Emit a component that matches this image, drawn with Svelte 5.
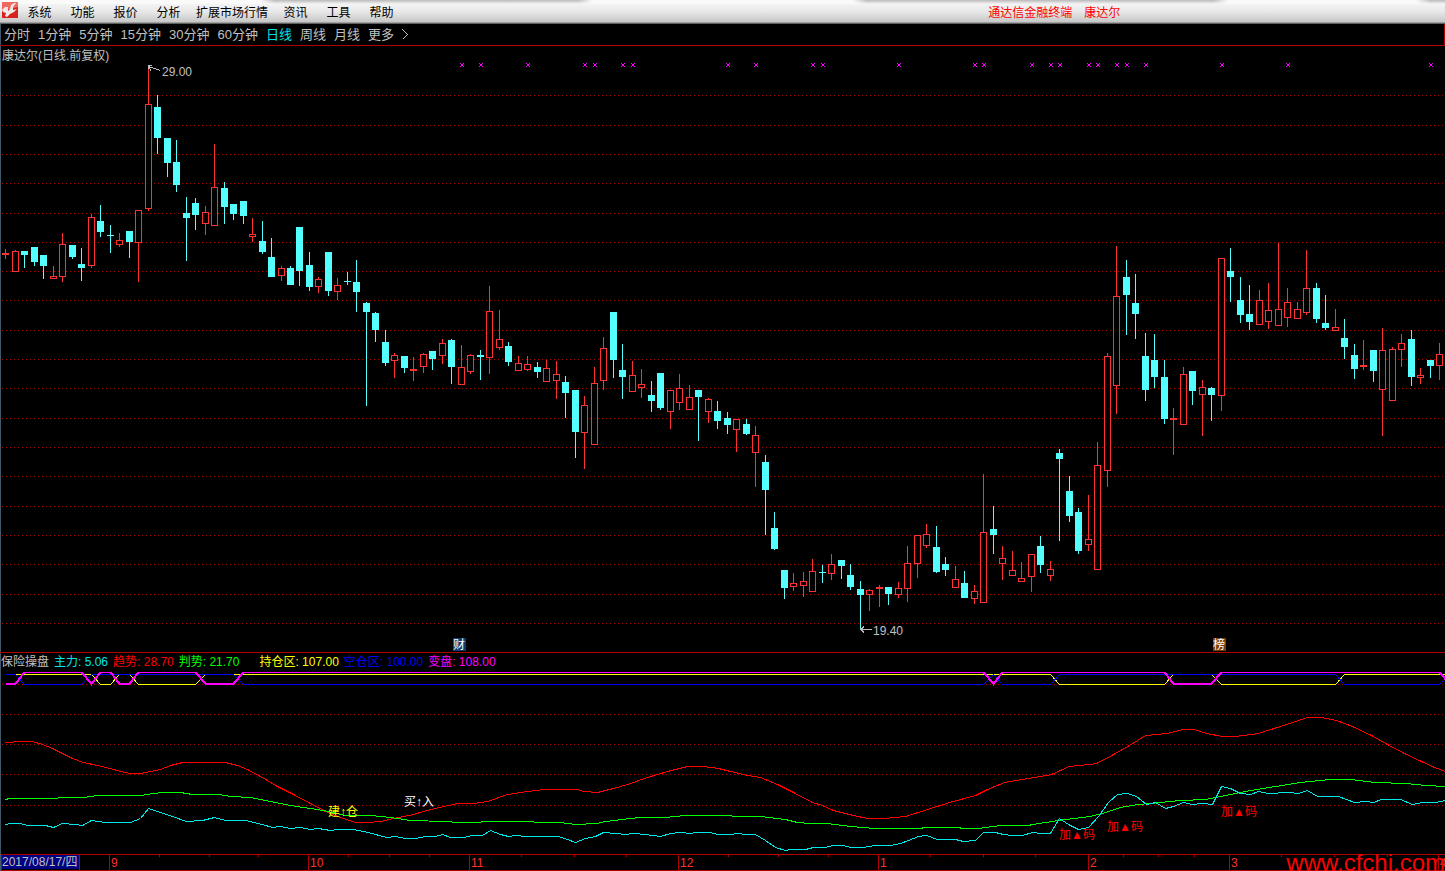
<script>
  // width of the window, everything on the charts is spread over it
  let width = 1445

  const menus = ['系统', '功能', '报价', '分析', '扩展市场行情', '资讯', '工具', '帮助']
  const periods = ['分时', '1分钟', '5分钟', '15分钟', '30分钟', '60分钟', '日线', '周线', '月线', '更多']
  let period = '日线'

  // up/down, high, body top, body bottom, low
  const candles = [
    ['r',249,253,255,259],['r',250,251,272,272],['c',251,251,255,268],['c',247,247,262,266],['c',255,255,266,279],
    ['r',266,276,279,279],['r',233,244,277,282],['c',245,245,257,259],['c',248,264,268,281],['r',214,217,266,268],
    ['c',205,221,232,237],['c',225,235,236,253],['r',233,240,245,247],['c',231,231,242,258],['r',210,210,243,282],
    ['r',69,104,209,211],['c',95,107,138,154],['c',138,138,163,177],['c',140,162,185,192],['c',197,213,218,261],
    ['c',198,203,215,230],['r',206,212,224,235],['r',144,187,226,226],['c',182,188,207,224],['c',204,204,214,220],
    ['c',201,201,216,224],['r',218,234,237,242],['c',221,241,252,254],['c',238,257,277,277],['r',266,268,276,281],
    ['c',266,268,285,285],['c',227,227,271,286],['c',252,265,287,291],['r',277,279,287,293],['c',252,252,291,296],
    ['r',278,285,292,300],['c',272,281,282,285],['c',260,282,292,312],['c',302,303,312,406],['c',312,313,330,342],
    ['c',330,342,363,366],['r',353,355,361,378],['c',356,356,368,373],['r',357,369,371,381],['r',353,354,367,373],
    ['c',351,351,359,370],['r',339,343,356,364],['c',339,340,367,384],['r',345,367,385,385],['r',354,355,372,374],
    ['c',350,355,357,380],['r',286,311,358,374],['r',310,339,348,350],['c',342,346,362,366],['r',356,363,371,371],
    ['r',356,364,370,371],['c',362,367,372,378],['r',360,368,382,382],['r',361,374,381,399],['c',376,382,393,418],
    ['c',390,390,432,458],['r',396,405,433,469],['r',367,383,445,445],['r',337,348,381,390],['c',312,312,360,378],
    ['c',344,370,377,399],['r',361,375,392,392],['r',369,384,388,398],['c',381,395,401,412],['c',373,373,408,410],
    ['r',390,390,412,429],['r',374,388,403,410],['r',385,397,410,410],['c',390,390,397,441],['r',398,399,412,423],
    ['c',401,411,421,429],['c',412,418,425,434],['r',419,419,430,452],['c',419,424,434,435],['r',426,435,453,487],
    ['c',455,462,490,535],['c',512,528,549,550],['c',570,570,588,599],['r',573,583,587,591],['r',572,581,586,597],
    ['r',559,571,592,592],['c',565,572,573,583],['r',554,564,574,580],['c',560,560,566,579],['c',564,575,587,590],
    ['c',581,589,595,629],['r',589,590,595,611],['r',585,587,589,607],['c',587,587,594,605],['r',582,588,595,598],
    ['r',546,563,589,602],['r',535,535,564,578],['r',524,534,546,548],['c',526,547,572,573],['c',557,564,570,576],
    ['r',566,579,588,588],['c',571,583,598,598],['r',585,591,599,604],['r',474,532,603,603],['c',506,529,535,554],
    ['r',546,558,564,580],['r',551,570,576,576],['r',562,578,582,582],['r',554,554,577,592],['c',536,546,565,573],
    ['r',561,569,576,581],['c',449,453,459,541],['c',476,491,516,522],['c',508,512,551,554],['r',495,539,545,551],
    ['r',442,465,570,570],['r',353,356,471,487],['r',246,296,386,414],['c',260,277,295,335],['c',274,303,314,339],
    ['c',333,356,390,401],['c',334,360,377,388],['c',360,377,419,424],['r',408,418,420,455],['r',367,374,425,425],
    ['c',371,371,391,405],['r',380,387,395,436],['c',387,388,395,421],['r',258,258,396,411],['c',248,271,277,302],
    ['c',277,300,315,323],['c',285,314,322,330],['r',290,300,325,325],['r',283,310,322,329],['r',243,309,326,326],
    ['r',288,302,318,327],['r',302,309,319,319],['r',250,288,313,315],['c',283,288,319,323],['c',295,323,328,330],
    ['r',309,327,331,331],['c',319,338,347,359],['c',344,355,369,379],['r',340,365,367,370],['c',350,350,371,382],
    ['r',328,350,390,436],['r',347,349,401,401],['r',334,343,350,367],['c',330,339,377,386],['r',368,375,378,384],
    ['c',360,360,366,378],['r',343,354,366,380]
  ]

  const signals = [48,50,55,61,62,65,66,76,79,85,86,94,102,103,108,110,111,114,115,117,118,120,128,135,150]
  const priceGrid = [95,125,154,183,213,242,271,300,330,359,388,418,447,476,506,535,564,594,623]
  const indGrid = [684,714,744,774,805]

  const trend = [5,742,20,741,32,741,42,744,52,748,62,753,72,758,83,762,97,765,110,768,120,771,130,773,140,773,150,771,160,769,170,765,182,762,225,762,237,765,247,769,260,776,277,786,293,794,310,803,325,811,340,817,355,822,367,822,380,821,393,818,413,814,430,809,448,805,457,803,473,803,487,801,507,794,520,792,543,789,577,789,583,791,597,792,613,788,627,784,647,777,667,771,687,766,703,766,718,768,730,771,747,775,760,777,777,784,793,792,812,802,822,805,833,810,853,815,867,818,883,818,905,816,924,810,949,802,975,795,987,789,1004,782,1022,779,1051,774,1069,766,1089,764,1096,763,1115,753,1129,745,1145,735,1166,733,1183,729,1194,729,1206,733,1222,736,1235,736,1258,733,1286,724,1307,717,1321,717,1336,720,1352,726,1371,735,1387,744,1404,753,1421,761,1434,767,1445,771]
  const judge = [5,799,9,798,55,798,60,797,83,797,97,795,140,795,153,793,163,792,180,792,192,794,218,794,230,796,250,797,270,801,290,805,323,810,345,815,370,815,390,817,410,820,445,821,457,822,475,822,487,821,532,821,535,822,560,822,575,824,596,823,605,821,630,818,640,817,665,817,685,815,730,815,733,816,760,816,785,819,797,822,810,823,827,823,850,826,875,828,920,828,924,827,957,827,963,828,978,828,1000,825,1027,825,1045,822,1065,819,1090,816,1105,812,1120,807,1138,804,1160,802,1180,800,1205,799,1225,795,1250,790,1275,786,1300,782,1330,779,1350,779,1375,782,1405,783,1425,785,1445,786]
  const force = [5,824,10,823,20,823,27,825,45,825,53,827,62,823,75,824,82,825,91,820,105,822,130,822,140,818,148,808,160,812,172,816,186,821,202,820,214,817,225,820,245,820,262,824,272,827,280,826,290,828,300,827,310,829,318,828,330,830,338,829,353,829,368,832,386,837,395,836,405,838,415,838,425,836,435,836,442,834,450,837,463,837,472,835,482,835,490,830,500,834,508,836,515,835,525,836,558,836,567,839,575,842,585,838,595,836,603,832,615,833,625,834,633,833,645,834,660,836,670,833,680,832,690,833,695,832,710,832,717,834,730,834,737,833,745,834,755,834,765,840,775,847,785,850,790,849,805,849,813,847,825,847,832,845,843,845,850,847,862,847,875,845,890,845,900,843,908,840,918,836,926,835,937,839,955,839,963,841,975,840,983,832,995,832,1003,834,1012,835,1022,835,1032,832,1040,833,1050,833,1059,818,1068,824,1078,829,1088,827,1098,816,1108,802,1117,794,1127,793,1136,796,1146,804,1155,802,1165,808,1173,806,1183,802,1192,804,1202,803,1212,804,1221,786,1230,788,1240,793,1250,794,1258,791,1268,793,1288,792,1298,793,1307,790,1317,796,1338,796,1354,802,1365,801,1373,802,1381,799,1400,799,1412,804,1422,802,1435,802,1445,800]

  // bar ranges of the three zone lines
  const turnLow = [[0,1],[9,9],[12,13],[21,24],[104,104],[123,127],[152,152]]
  const holdLow = [[10,11],[14,20],[111,122],[128,140]]
  const emptyHigh = [[0,1],[9,24],[104,104],[111,140],[152,152]]

  const legend = [
    { name: '主力: 5.06', color: 'aqua' },
    { name: '趋势: 28.70', color: 'red' },
    { name: '判势: 21.70', color: 'lime' },
    { name: '持仓区: 107.00', color: 'yellow' },
    { name: '空仓区: 100.00', color: 'blue' },
    { name: '变盘: 108.00', color: 'magenta' }
  ]

  const notes = [
    { text: '建↑仓', x: 328, y: 816, color: 'yellow' },
    { text: '买↑入', x: 404, y: 806, color: 'white' },
    { text: '加▲码', x: 1059, y: 839, color: 'red' },
    { text: '加▲码', x: 1107, y: 831, color: 'red' },
    { text: '加▲码', x: 1221, y: 816, color: 'red' }
  ]

  const months = [[109,'9'],[308,'10'],[469,'11'],[678,'12'],[878,'1'],[1088,'2'],[1229,'3'],[1438,'4']]
  const ticks = [159,209,258,348,389,429,521,574,626,728,778,828,930,983,1035,1123,1158,1194,1281,1334,1387]

  $: step = (width - 11) / 151
  $: bar = (i) => Math.floor(5.6 + i * step)
  $: sx = (x) => Math.round((x * width) / 1445)
  $: curve = (data) => {
    let out = ''
    for (let i = 0; i < data.length; i += 2) out += `${sx(data[i]) + 0.5},${data[i + 1] + 0.5} `
    return out
  }
  $: zone = (ranges, inside, outside) => {
    let out = ''
    for (let i = 0; i <= 152; i++) {
      const hit = ranges.some(([a, b]) => i >= a && i <= b)
      out += `${bar(i) + 0.5},${hit ? inside : outside} `
    }
    return out
  }
</script>

<div class="terminal" bind:clientWidth={width}>
  <header class="menubar">
    <svg class="logo" viewBox="0 0 16 16" aria-hidden="true">
      <rect width="16" height="16" fill="#d8201c" />
      <path d="M0 0H16V5L0 9Z" fill="#ee6a60" />
      <path d="M0 8L3 5L6 5L6 9L8 7L9 3L12 1L14 1L11 5L11 8L15 7L12 10L8 12L5 15L3 14L4 11L1 10Z" fill="#f0e8e4" />
    </svg>
    <nav>
      {#each menus as item}
        <button class="menu-item">{item}</button>
      {/each}
    </nav>
    <span class="app-title">通达信金融终端　康达尔</span>
  </header>

  <main>
    <div class="periods">
      {#each periods as p}
        <button class="period" class:active={p === period} on:click={() => (period = p)}>{p}</button>
      {/each}
      <button class="period" aria-label="更多周期">
        <svg width="6" height="11" viewBox="0 0 6 11"><path d="M0.5 0.5L5.5 5.5L0.5 10.5" fill="none" stroke="#c0c0c0" /></svg>
      </button>
    </div>

    <!-- price chart -->
    <section class="price">
      <h1>康达尔(日线.前复权)</h1>
      <svg {width} height="590" viewBox="0 62 {width} 590">
        {#each priceGrid as y}
          <line class="grid" x1="2" x2={width} y1={y + 0.5} y2={y + 0.5} />
        {/each}
        {#each signals as i}
          <path class="signal" d="M{bar(i) - 1} 63h1v1h2v-1h1v1h-1v2h1v1h-1v-1h-2v1h-1v-1h1v-2h-1z" />
        {/each}
        {#each candles as [kind, high, top, bottom, low], i}
          {#if kind === 'c'}
            <rect class="down" x={bar(i)} y={high} width="1" height={low - high} />
            <rect class="down" x={bar(i) - 3} y={top} width="7" height={bottom - top} />
          {:else}
            <rect class="up" x={bar(i)} y={high} width="1" height={top - high} />
            <rect class="up" x={bar(i)} y={bottom} width="1" height={low - bottom} />
            <rect class="up-body" x={bar(i) - 2.5} y={top + 0.5} width="6" height={bottom - top - 1} />
          {/if}
        {/each}
        <path class="pointer" d="M{bar(15) + 4} 65.5H{bar(15)}M{bar(15) + 0.5} 65V69M{bar(15) + 1} 66.5L{bar(15) + 12} 70.5M{bar(15) + 1} 67.5L{bar(15) + 3} 70.5" />
        <text class="label" x={bar(15) + 14} y="76">29.00</text>
        <path class="pointer" d="M{bar(90) + 12} 629.5H{bar(90)}M{bar(90) + 4} 626.5L{bar(90) + 1} 629.5L{bar(90) + 4} 632.5" />
        <text class="label" x={bar(90) + 13} y="635">19.40</text>
        <rect x={sx(453)} y="638" width="13" height="13" fill="#0c3c6c" />
        <text class="badge" x={sx(453)} y="649">财</text>
        <rect x={sx(1213)} y="638" width="13" height="13" fill="#7c3c00" />
        <text class="badge" x={sx(1213)} y="649">榜</text>
      </svg>
    </section>

    <!-- indicator -->
    <section class="indicator">
      <div class="legend">
        <span>保险操盘</span>
        {#each legend as item}
          <span class={item.color}>{item.name}</span>
        {/each}
      </div>
      <svg {width} height="182" viewBox="0 672 {width} 182">
        {#each indGrid as y}
          <line class="grid" x1="2" x2={width} y1={y + 0.5} y2={y + 0.5} />
        {/each}
        <polyline class="line yellow" points={zone(holdLow, 684.5, 674.5)} />
        <polyline class="line blue" points={zone(emptyHigh, 674.5, 684.5)} />
        <polyline class="line magenta thick" points={zone(turnLow, 684, 672)} />
        <polyline class="line red" points={curve(trend)} />
        <polyline class="line lime" points={curve(judge)} />
        <polyline class="line aqua" points={curve(force)} />
        {#each notes as n}
          <text class="note {n.color}" x={sx(n.x)} y={n.y}>{n.text}</text>
        {/each}
      </svg>
    </section>

    <footer>
      <svg {width} height="17" viewBox="0 854 {width} 17">
        <rect x="2" y="855" width="77" height="14" fill="#000080" />
        <text class="label" x="2" y="866">2017/08/17/四</text>
        <path class="axis" d="M1 854.5H{width}M1 870.5H{width}M1.5 854V870M79.5 854V870" />
        {#each ticks as t}
          <path class="axis" d="M{sx(t) + 0.5} 855v2" />
        {/each}
        {#each months as [x, name]}
          <path class="axis" d="M{sx(x) + 0.5} 855v15" />
          <text class="month" x={sx(x) + 2} y="867">{name}</text>
        {/each}
      </svg>
      <span class="site">www.cfchi.com</span>
    </footer>
  </main>
</div>

<style>
  :global(body) {
    margin: 0;
    background: #000;
  }

  .terminal {
    overflow: hidden;
    background: #000;
    color: #c0c0c0;
    font-family: "Liberation Sans", "Noto Sans CJK SC", sans-serif;
    font-size: 12px;
  }

  button {
    border: 0;
    padding: 0;
    background: none;
    font: inherit;
    cursor: pointer;
  }

  svg {
    display: block;
    shape-rendering: crispEdges;
  }

  .menubar {
    box-sizing: border-box;
    display: flex;
    align-items: center;
    height: 24px;
    padding-left: 2px;
    border-bottom: 1px solid #606060;
    color: #000;
    background:
      linear-gradient(90deg, #fafafa 18%, transparent 19%, transparent 40%, #fafafa 41%, #fafafa 59%, transparent 60%, transparent 84%, #fafafa 85%, #fafafa 98%, transparent 99%) 0 0 / 100% 4px no-repeat,
      linear-gradient(#b8b8b8, rgba(240, 240, 240, 0)) 0 0 / 100% 4px no-repeat,
      linear-gradient(#fafafa, #e8e8e8 50%, #c8c8c8 94%, #a0a0a0 95%);
  }

  .logo {
    width: 16px;
    height: 16px;
    margin-bottom: 3px;
    shape-rendering: auto;
  }

  nav {
    display: flex;
  }

  .menu-item {
    min-width: 43px;
    height: 22px;
    padding: 0 6px;
    color: #000;
  }

  .app-title {
    margin-left: auto;
    margin-right: 22.5%;
    color: #f00;
  }

  main {
    box-shadow: inset 1px 0 #405868;
  }

  .periods {
    display: flex;
    align-items: center;
    gap: 8px;
    height: 21px;
    padding-left: 4px;
    border-right: 1px solid #b00000;
    border-bottom: 1px solid #b00000;
    font-size: 13px;
  }

  .period {
    color: #c0c0c0;
    line-height: 20px;
  }

  .period.active {
    color: #00e0e0;
  }

  .price {
    border-bottom: 1px solid #b00000;
  }

  h1 {
    height: 16px;
    margin: 0;
    padding-left: 2px;
    font-size: 12px;
    font-weight: normal;
    line-height: 21px;
  }

  .grid {
    stroke: #b00000;
    stroke-dasharray: 1 3;
  }

  .signal {
    fill: #f0f;
  }

  .down {
    fill: #54ffff;
  }

  .up {
    fill: #ff3232;
  }

  .up-body {
    fill: #000;
    stroke: #ff3232;
  }

  .pointer {
    fill: none;
    stroke: #c0c0c0;
  }

  .label {
    fill: #c0c0c0;
  }

  .badge {
    fill: #fff;
  }

  .legend {
    display: flex;
    gap: 5px;
    height: 19px;
    padding-left: 1px;
    line-height: 19px;
    white-space: nowrap;
  }

  .legend .yellow {
    margin-left: 15px;
  }

  .aqua { color: #00e8e8; }
  .red { color: #f00; }
  .lime { color: #0f0; }
  .yellow { color: #ff0; }
  .blue { color: #00f; }
  .magenta { color: #f0f; }
  .white { color: #fff; }

  .line {
    fill: none;
    stroke: currentColor;
  }

  .thick {
    stroke-width: 2;
  }

  .note {
    fill: currentColor;
  }

  footer {
    position: relative;
  }

  .axis {
    fill: none;
    stroke: #b00000;
  }

  .month {
    fill: #ff3232;
  }

  /* watermark runs over the right end of the date axis */
  .site {
    position: absolute;
    right: 0;
    bottom: 0;
    color: #f00;
    font-size: 24px;
    line-height: 16px;
  }
</style>
